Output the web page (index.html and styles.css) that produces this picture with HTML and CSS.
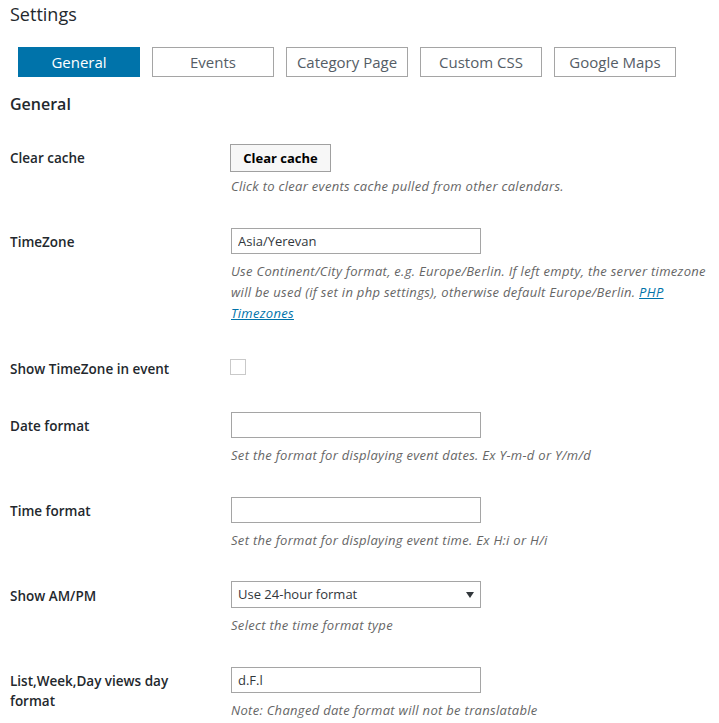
FILE: index.html
```html
<!DOCTYPE html>
<html lang="en">
<head>
    <meta charset="UTF-8">
    <meta name="viewport" content="width=device-width, initial-scale=1.0">
    <title>Settings</title>
    <link rel="stylesheet" href="styles.css">
</head>
<body>
    <div class="wrap">
        <h1 class="page-title">Settings</h1>

        <nav class="tabs">
            <a href="#" class="tab tab-active">General</a>
            <a href="#" class="tab">Events</a>
            <a href="#" class="tab">Category Page</a>
            <a href="#" class="tab">Custom CSS</a>
            <a href="#" class="tab">Google Maps</a>
        </nav>

        <h2 class="section-title">General</h2>

        <form class="settings-form">
            <div class="row">
                <div class="row-label">Clear cache</div>
                <div class="row-field">
                    <button type="button" class="button">Clear cache</button>
                    <p class="description desc-button">Click to clear events cache pulled from other calendars.</p>
                </div>
            </div>

            <div class="row">
                <div class="row-label">TimeZone</div>
                <div class="row-field">
                    <input type="text" class="text-input" value="Asia/Yerevan">
                    <p class="description">Use Continent/City format, e.g. Europe/Berlin. If left empty, the server timezone will be used (if set in php settings), otherwise default Europe/Berlin. <a href="#">PHP Timezones</a></p>
                </div>
            </div>

            <div class="row">
                <div class="row-label">Show TimeZone in event</div>
                <div class="row-field row-check">
                    <span class="checkbox"></span>
                </div>
            </div>

            <div class="row">
                <div class="row-label">Date format</div>
                <div class="row-field">
                    <input type="text" class="text-input" value="">
                    <p class="description">Set the format for displaying event dates. Ex Y-m-d or Y/m/d</p>
                </div>
            </div>

            <div class="row">
                <div class="row-label">Time format</div>
                <div class="row-field">
                    <input type="text" class="text-input" value="">
                    <p class="description">Set the format for displaying event time. Ex H:i or H/i</p>
                </div>
            </div>

            <div class="row">
                <div class="row-label">Show AM/PM</div>
                <div class="row-field">
                    <div class="select">
                        <span class="select-value">Use 24-hour format</span>
                    </div>
                    <p class="description">Select the time format type</p>
                </div>
            </div>

            <div class="row">
                <div class="row-label">List,Week,Day views day format</div>
                <div class="row-field">
                    <input type="text" class="text-input" value="d.F.l">
                    <p class="description">Note: Changed date format will not be translatable</p>
                </div>
            </div>
        </form>
    </div>
</body>
</html>
```

FILE: styles.css
```css
* {
    margin: 0;
    padding: 0;
    box-sizing: border-box;
}

body {
    font-family: 'Open Sans', 'Liberation Sans', sans-serif;
    font-size: 14px;
    color: #23282d;
    background: #fff;
}

.wrap {
    padding: 0 10px;
}

.page-title {
    font-size: 18px;
    font-weight: 400;
    line-height: 28px;
}

.tabs {
    display: flex;
    gap: 12px;
    margin-top: 19px;
    padding-left: 8px;
}

.tab {
    width: 122px;
    height: 30px;
    border: 1px solid #a5a5a5;
    font-size: 15px;
    line-height: 28px;
    text-align: center;
    color: #555d66;
    text-decoration: none;
}

.tab-active {
    background: #0073aa;
    border-color: #0073aa;
    color: #fff;
}

.section-title {
    margin-top: 15px;
    font-size: 16px;
    font-weight: 600;
    line-height: 24px;
}

.settings-form {
    margin-top: 13px;
}

.row {
    display: grid;
    grid-template-columns: 221px 1fr;
}

.row-label {
    width: 200px;
    padding: 19px 0 18px;
    font-size: 13.5px;
    font-weight: 600;
    line-height: 20px;
}

.row-field {
    padding: 15px 0 16px;
}

.row-field.row-check {
    padding-top: 19px;
}

.button {
    display: block;
    width: 101px;
    height: 28px;
    border: 1px solid #a0a0a0;
    background: #f7f7f7;
    font-family: inherit;
    font-size: 13px;
    font-weight: 700;
    color: #000;
    margin-left: -1px;
}

.text-input {
    display: block;
    width: 250px;
    height: 26px;
    padding: 0 6px;
    border: 1px solid #a5a5a5;
    font-family: inherit;
    font-size: 13px;
    color: #32373c;
    outline: none;
}

.select {
    position: relative;
    width: 250px;
    height: 27px;
    margin-top: -1px;
    padding: 0 6px;
    border: 1px solid #a5a5a5;
    font-size: 13px;
    line-height: 25px;
    color: #32373c;
}

.select::after {
    content: "";
    position: absolute;
    right: 6px;
    top: 10px;
    border-left: 4px solid transparent;
    border-right: 4px solid transparent;
    border-top: 6px solid #32373c;
}

.checkbox {
    display: block;
    width: 16px;
    height: 16px;
    margin-left: -1px;
    border: 1px solid #c9c9c9;
}

.description {
    max-width: 480px;
    margin-top: 7px;
    font-size: 13px;
    font-style: italic;
    letter-spacing: 0.3px;
    line-height: 21px;
    color: #666;
}

.desc-button {
    margin-top: 4px;
}

.description a {
    color: #0073aa;
}
```
